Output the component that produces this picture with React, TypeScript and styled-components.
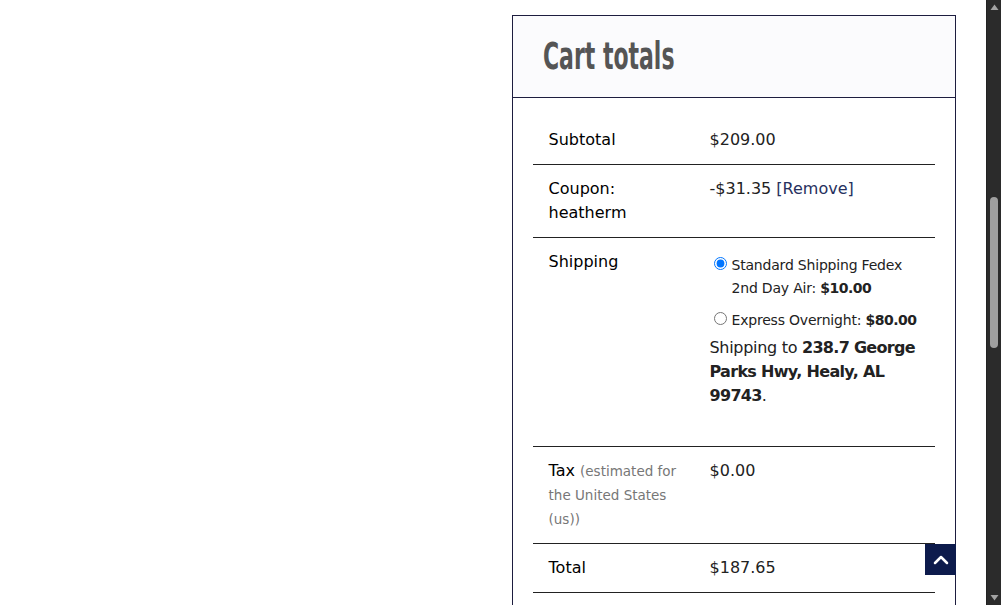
import * as React from 'react';
import styled, {createGlobalStyle} from 'styled-components';

// scroll state of the page the screenshot was taken from
const DOC_HEIGHT = 2304;
const SCROLL_TOP = 729;
const VIEW_HEIGHT = 605;
const ARROW = 15;

const GlobalStyle = createGlobalStyle`
    html, body {
        margin: 0;
        background: #fff;
    }
    body {
        color: #111;
        font-family: 'DejaVu Sans', 'Noto Sans', sans-serif;
    }
`;

const Window = styled.div`
    display: flex;
    height: 100vh;
    overflow: hidden;
`;

const Viewport = styled.div`
    position: relative;
    flex: 1;
    min-width: 0;
    overflow: hidden;
`;

const Page = styled.div`
    padding: 15px 30px 0;
    display: flex;
    justify-content: flex-end;
`;

const Collaterals = styled.div`
    width: 48%;
`;

const Box = styled.div`
    border: 1px solid #1d1d3f;
`;

const Header = styled.div`
    height: 81px;
    display: flex;
    align-items: center;
    padding: 0 30px;
    background: #fbfbfd;
    border-bottom: 1px solid #1d1d3f;
`;

const Title = styled.h2`
    margin: 0;
    font-family: 'DejaVu Sans Condensed', 'DejaVu Sans', sans-serif;
    font-weight: 700;
    font-size: 37px;
    line-height: 1;
    color: #555;
    transform: scaleX(0.66);
    transform-origin: left center;
    white-space: nowrap;
`;

const Body = styled.div`
    padding: 18px 20px 30px;
`;

const Table = styled.table`
    width: 100%;
    border-collapse: collapse;
    font-size: 16px;
    line-height: 24px;
`;

const Row = styled.tr`
    border-bottom: 1px solid #222;
`;

const Label = styled.th`
    width: 40%;
    padding: 12px 16px;
    text-align: left;
    vertical-align: top;
    font-weight: 400;
    color: #000;
`;

const Value = styled.td`
    padding: 12px 16px;
    vertical-align: top;
    color: #222;
`;

const RemoveLink = styled.a`
    color: #26305e;
    text-decoration: none;
`;

const Small = styled.small`
    font-size: 13.5px;
    line-height: 24px;
    color: #777;
`;

const Abbr = styled.span`
    text-transform: lowercase;
`;

const Methods = styled.ul`
    list-style: none;
    margin: 4px 0;
    padding: 0;
`;

const Method = styled.li`
    display: flex;
    align-items: flex-start;
    font-size: 14px;
    line-height: 23px;
    letter-spacing: -0.2px;
    margin-bottom: 9px;

    &:last-child {
        margin-bottom: 0;
    }

    b {
        letter-spacing: -0.5px;
    }
`;

const Radio = styled.input`
    flex: none;
    width: 13px;
    height: 13px;
    margin: 3px 5px 0 4px;
`;

const Destination = styled.p`
    margin: 0 0 26px;
    letter-spacing: -0.3px;

    b {
        letter-spacing: -0.7px;
    }
`;

const Checkout = styled.a`
    display: block;
    margin-top: 24px;
    padding: 16px;
    text-align: center;
    background: #0d1b4c;
    color: #fff;
    font-weight: 700;
    text-decoration: none;
`;

const ToTop = styled.button`
    position: absolute;
    right: 30px;
    bottom: 30px;
    width: 31px;
    height: 31px;
    padding: 0;
    border: 0;
    background: #0d1b4c;
    display: flex;
    align-items: center;
    justify-content: center;
    cursor: pointer;
`;

const Rail = styled.div`
    flex: none;
    width: 15px;
    display: flex;
    flex-direction: column;
    background: #2b2b2b;
    border-left: 1px solid #222;
    box-sizing: border-box;
`;

const RailArrow = styled.div`
    flex: none;
    height: ${ARROW}px;
    display: flex;
    align-items: center;
    justify-content: center;
`;

const Track = styled.div`
    flex: 1;
    display: flex;
    flex-direction: column;
    align-items: center;
`;

const Thumb = styled.div`
    width: 8px;
    border-radius: 4px;
    background: #9f9f9f;
`;

const ChevronUp: React.FC = () => (
    <svg width="18" height="18" viewBox="0 0 24 24" fill="none" stroke="#fff" strokeWidth="3.4" strokeLinecap="round" strokeLinejoin="round">
        <path d="M4 16l8-8 8 8" />
    </svg>
);

const Triangle: React.FC<{down?: boolean}> = ({down}) => (
    <svg width="9" height="7" viewBox="0 0 9 7">
        <path d={down ? 'M0.5 1h8L4.5 6.5z' : 'M0.5 6h8L4.5 0.5z'} fill="#a3a3a3" />
    </svg>
);

const Scrollbar: React.FC = () => {
    const track = VIEW_HEIGHT - ARROW * 2;
    const thumbHeight = Math.round((VIEW_HEIGHT / DOC_HEIGHT) * track);
    const thumbTop = Math.round((SCROLL_TOP / DOC_HEIGHT) * track);
    return (
        <Rail>
            <RailArrow>
                <Triangle />
            </RailArrow>
            <Track>
                <Thumb style={{marginTop: thumbTop, height: thumbHeight}} />
            </Track>
            <RailArrow>
                <Triangle down />
            </RailArrow>
        </Rail>
    );
};

const App: React.FC = () => (
    <>
        <GlobalStyle />
        <Window>
            <Viewport>
                <Page>
                    <Collaterals>
                        <Box>
                            <Header>
                                <Title>Cart totals</Title>
                            </Header>
                            <Body>
                                <Table>
                                    <tbody>
                                        <Row>
                                            <Label>Subtotal</Label>
                                            <Value>$209.00</Value>
                                        </Row>
                                        <Row>
                                            <Label>Coupon: heatherm</Label>
                                            <Value>
                                                -$31.35 <RemoveLink href="#">[Remove]</RemoveLink>
                                            </Value>
                                        </Row>
                                        <Row>
                                            <Label>Shipping</Label>
                                            <Value>
                                                <Methods>
                                                    <Method>
                                                        <Radio type="radio" name="shipping" defaultChecked />
                                                        <label>
                                                            Standard Shipping Fedex 2nd Day Air: <b>$10.00</b>
                                                        </label>
                                                    </Method>
                                                    <Method>
                                                        <Radio type="radio" name="shipping" />
                                                        <label>
                                                            Express Overnight: <b>$80.00</b>
                                                        </label>
                                                    </Method>
                                                </Methods>
                                                <Destination>
                                                    Shipping to <b>238.7 George Parks Hwy, Healy, AL 99743</b>.
                                                </Destination>
                                            </Value>
                                        </Row>
                                        <Row>
                                            <Label>
                                                Tax{' '}
                                                <Small>
                                                    (estimated for the United States (<Abbr>US</Abbr>))
                                                </Small>
                                            </Label>
                                            <Value>$0.00</Value>
                                        </Row>
                                        <Row>
                                            <Label>Total</Label>
                                            <Value>$187.65</Value>
                                        </Row>
                                    </tbody>
                                </Table>
                                <Checkout href="#">Proceed to checkout</Checkout>
                            </Body>
                        </Box>
                    </Collaterals>
                </Page>
                <ToTop aria-label="Scroll to top">
                    <ChevronUp />
                </ToTop>
            </Viewport>
            <Scrollbar />
        </Window>
    </>
);

export default App;
